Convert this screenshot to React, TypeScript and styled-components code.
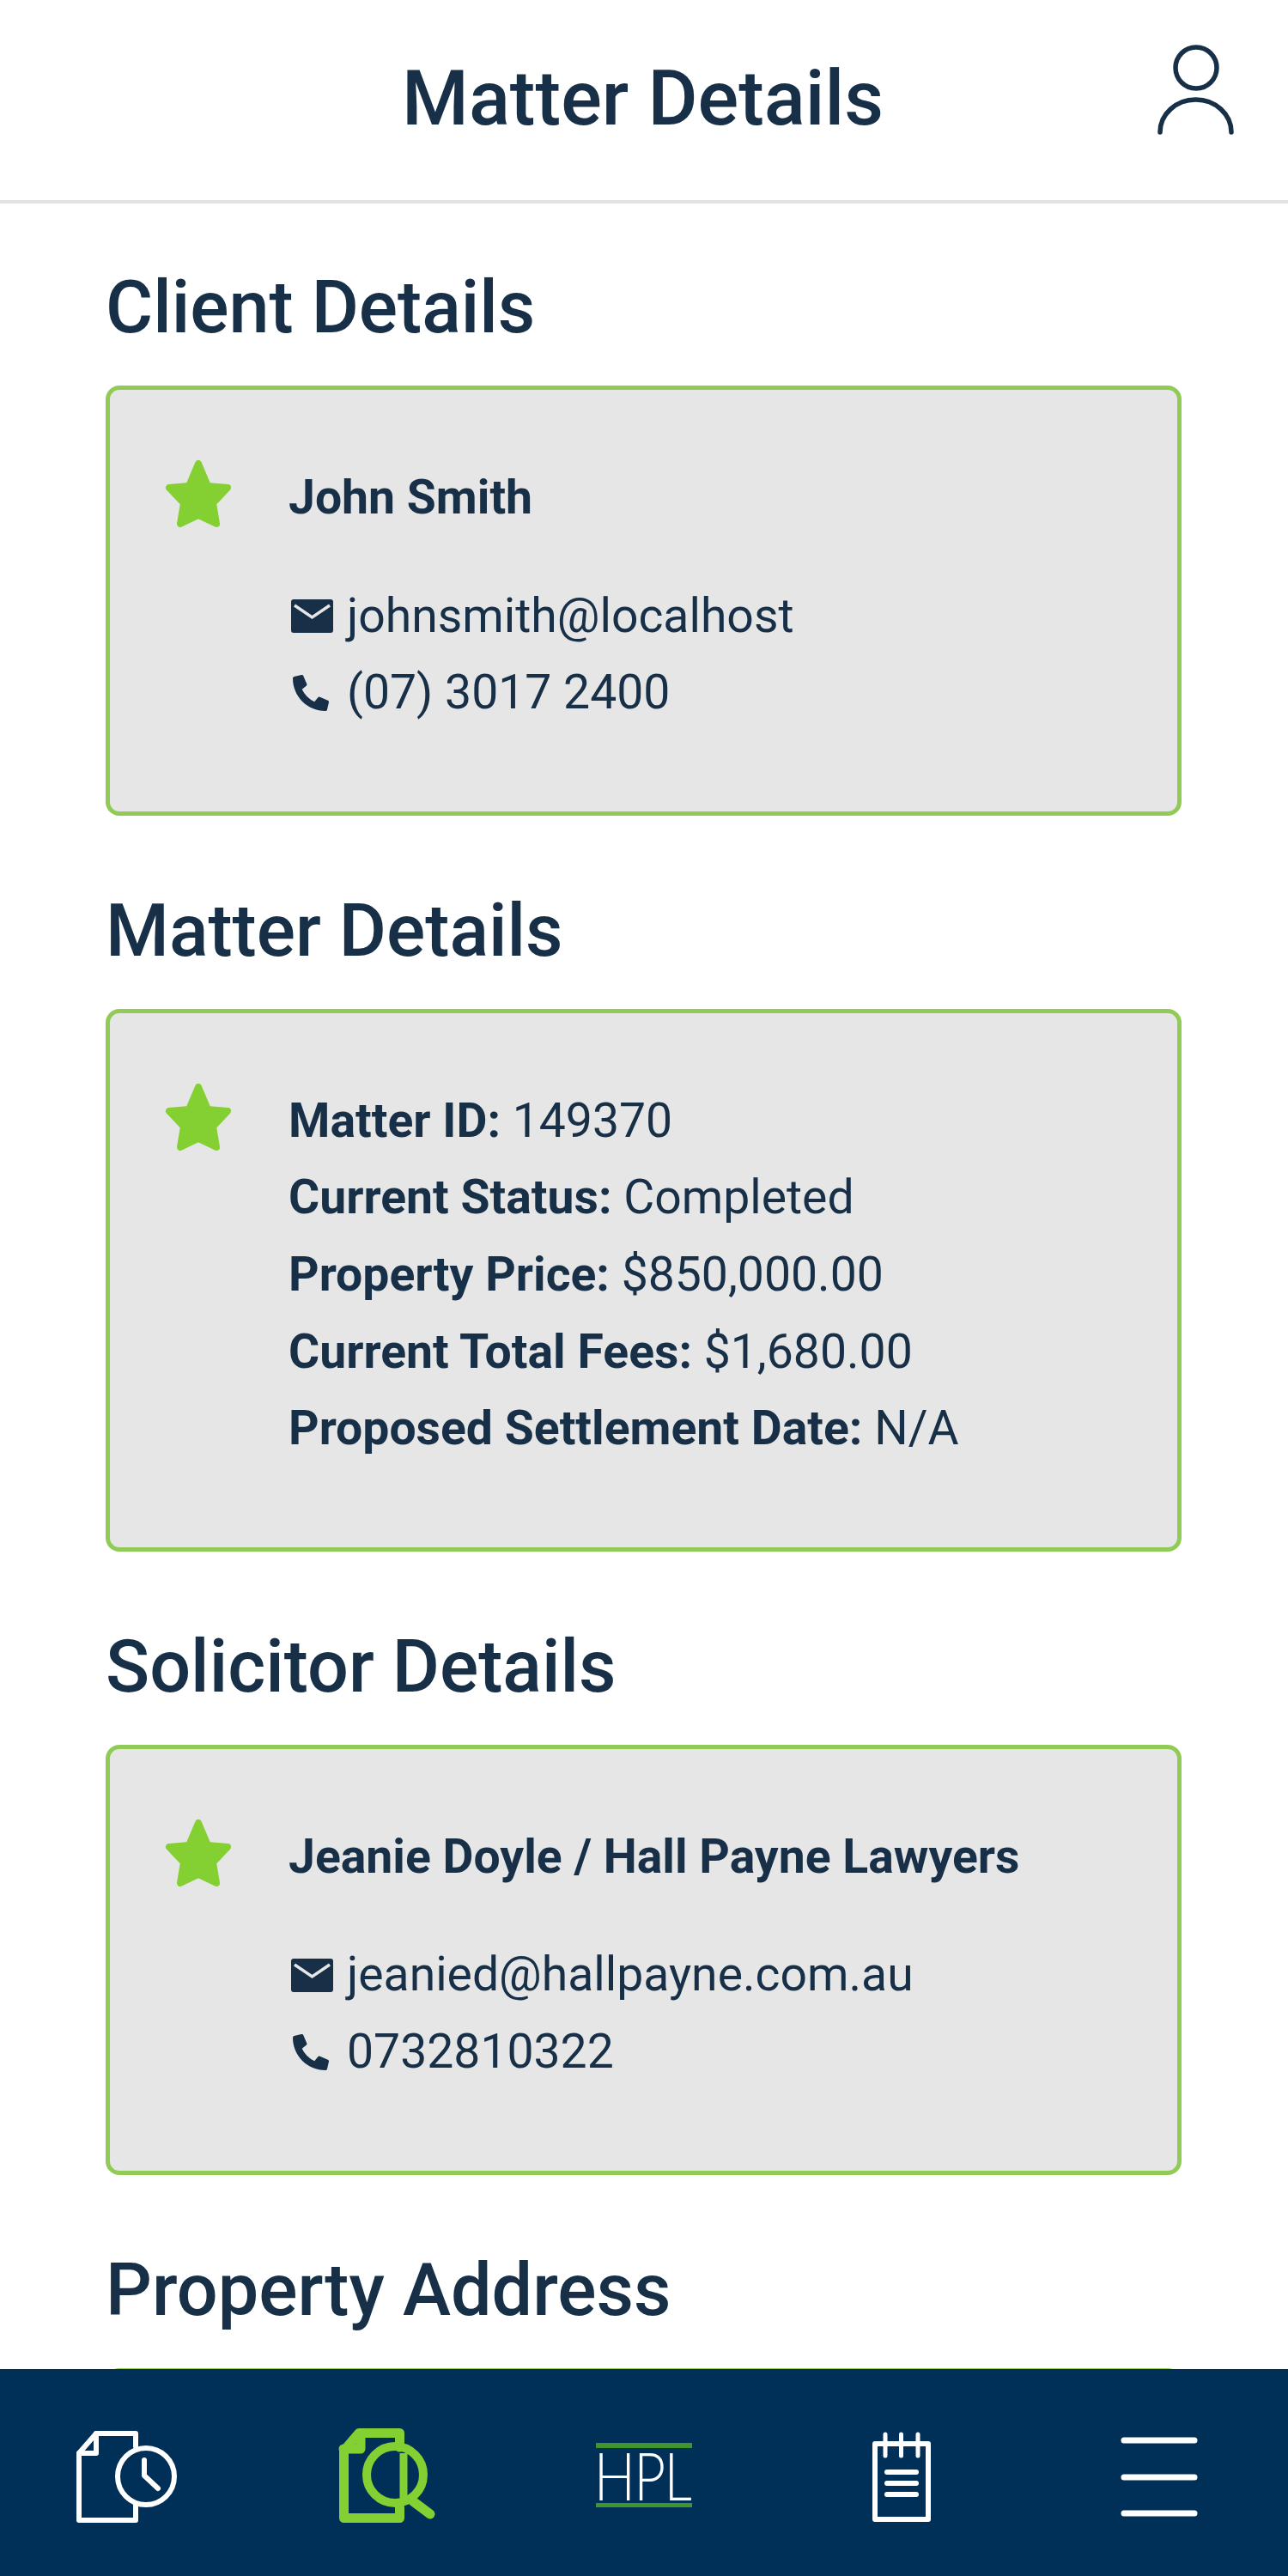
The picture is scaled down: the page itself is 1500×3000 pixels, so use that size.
import React from "react";
import styled, { createGlobalStyle } from "styled-components";
import { FaPhoneAlt } from "react-icons/fa";

const GlobalStyle = createGlobalStyle`
  html, body {
    margin: 0;
    padding: 0;
    background: #fff;
  }
  * {
    box-sizing: border-box;
  }
`;

const INK = "#172f47";
const GREEN = "#84d032";

const Screen = styled.div`
  width: 1500px;
  height: 3000px;
  display: flex;
  flex-direction: column;
  overflow: hidden;
  background: #fff;
  font-family: Roboto, "Liberation Sans", sans-serif;
  color: ${INK};
`;

const Header = styled.header`
  flex: none;
  height: 237px;
  display: grid;
  grid-template-columns: 1fr auto 1fr;
  align-items: start;
  border-bottom: 4px solid #e2e2e2;
`;

const Title = styled.h1`
  grid-column: 2;
  margin: 65px 3px 0 0;
  font-size: 89px;
  line-height: 100px;
  font-weight: 500;
`;

const UserButton = styled.div`
  grid-column: 3;
  justify-self: end;
  margin: 25px 57px 0 0;
  display: flex;
`;

const Content = styled.main`
  flex: 1;
  min-height: 0;
  overflow: hidden;
  padding: 72px 124px 0 123px;
`;

const Section = styled.section`
  margin-bottom: 85px;
`;

const SectionTitle = styled.h2`
  margin: 0 0 40px;
  font-size: 84.5px;
  line-height: 100px;
  font-weight: 500;
`;

const Card = styled.div`
  display: grid;
  grid-template-columns: 208px 1fr;
  padding: 81px 0 93px;
  background: #e6e6e6;
  border: 5px solid #8fcb55;
  border-radius: 16px;
`;

const StarCell = styled.div`
  display: flex;
  justify-content: flex-end;
  padding-right: 62px;
`;

const Body = styled.div`
  font-size: 55.3px;
  line-height: 89.6px;
`;

const Name = styled.div`
  font-weight: 700;
  margin-bottom: 48px;
`;

const Line = styled.div`
  display: flex;
  align-items: center;
`;

const ContactIcon = styled.span`
  flex: none;
  width: 68px;
  display: flex;
  align-items: center;
  padding-left: 5px;
`;

const Label = styled.b`
  font-weight: 700;
`;

const BottomBar = styled.nav`
  flex: none;
  height: 241px;
  display: grid;
  grid-template-columns: repeat(5, 300px);
  justify-items: center;
  align-items: start;
  padding-top: 61px;
  background: #003058;
`;

const NavIcon = styled.svg`
  display: block;
`;

const Logo = styled.div`
  width: 112px;
  height: 75px;
  margin-top: 25px;
  display: flex;
  align-items: center;
  justify-content: center;
  border-top: 6px solid #3f962e;
  border-bottom: 5px solid #3f962e;
  color: #fff;
  font-family: Lato, "Liberation Sans", sans-serif;
  font-size: 76px;
  font-weight: 300;
  line-height: 1;
  letter-spacing: -2px;
`;

const LogoText = styled.span`
  display: inline-block;
  transform: translateX(-2px) scaleX(0.84);
`;

const MailGlyph = styled.svg`
  margin-left: -2px;
`;

const Star = () => (
  <svg width="84" height="84" viewBox="0 0 84 84" aria-hidden="true">
    <path
      d="M41 5 L52 31 L75 33 L58 51 L62 75 L41 65 L20 75 L24 51 L7 33 L30 31 Z"
      fill={GREEN}
      stroke={GREEN}
      strokeWidth="8"
      strokeLinejoin="round"
    />
  </svg>
);

const MailIcon = () => (
  <MailGlyph width="49" height="39" viewBox="0 0 49 39" aria-hidden="true">
    <rect width="49" height="39" rx="3" fill={INK} />
    <path d="M4 7 L24.5 21 L45 7" fill="none" stroke="#e6e6e6" strokeWidth="3.5" />
  </MailGlyph>
);

const UserIcon = () => (
  <svg width="100" height="140" viewBox="0 0 100 140" fill="none" stroke={INK} strokeWidth="5.5" strokeLinecap="round" aria-hidden="true">
    <circle cx="50" cy="54" r="24" />
    <path d="M8 129 A41.5 38 0 0 1 91 129" />
  </svg>
);

const HistoryIcon = () => (
  <NavIcon width="140" height="130" viewBox="0 0 140 130" fill="none" stroke="#fff" strokeWidth="6" strokeLinejoin="round" strokeLinecap="round">
    <path d="M78 29 V14 H32 L12 37 V115 H78 V98" />
    <path d="M32 14 V37 H12" />
    <circle cx="90" cy="64" r="33" />
    <path d="M88 45 V63 L104 78" />
  </NavIcon>
);

const SearchDocIcon = () => (
  <NavIcon width="140" height="130" viewBox="0 0 140 130" fill="none" stroke={GREEN} strokeWidth="11" strokeLinejoin="round" strokeLinecap="round">
    <path d="M85.5 30 V13.5 H38 L20.5 34 V112.5 H85.5 V100" />
    <path d="M40 14 V32 H20" />
    <circle cx="80" cy="62" r="33" strokeWidth="10" />
    <path d="M90 37 V93" strokeWidth="9" strokeLinecap="butt" />
    <path d="M101 93 L121 108" />
  </NavIcon>
);

const NotesIcon = () => (
  <NavIcon width="140" height="130" viewBox="0 0 140 130" fill="none" stroke="#fff" strokeWidth="6" strokeLinecap="round" strokeLinejoin="round">
    <path d="M39 26 H101 V114 H39 Z" />
    <path d="M51 15 V40 M69.5 15 V40 M89 15 V40" strokeWidth="5" />
    <path d="M53 59 H87 M53 72 H87 M53 85 H87" strokeWidth="6" />
  </NavIcon>
);

const MenuIcon = () => (
  <NavIcon width="140" height="130" viewBox="0 0 140 130" fill="none" stroke="#fff" strokeWidth="7" strokeLinecap="round">
    <path d="M29 22 H111 M29 65 H111 M29 107 H111" />
  </NavIcon>
);

const ContactCard = ({ name, email, phone }: { name: string; email: string; phone: string }) => (
  <Card>
    <StarCell>
      <Star />
    </StarCell>
    <Body>
      <Name>{name}</Name>
      <Line>
        <ContactIcon>
          <MailIcon />
        </ContactIcon>
        {email}
      </Line>
      <Line>
        <ContactIcon>
          <FaPhoneAlt size={42} color={INK} />
        </ContactIcon>
        {phone}
      </Line>
    </Body>
  </Card>
);

const matterRows = [
  ["Matter ID:", "149370"],
  ["Current Status:", "Completed"],
  ["Property Price:", "$850,000.00"],
  ["Current Total Fees:", "$1,680.00"],
  ["Proposed Settlement Date:", "N/A"],
];

export default function App() {
  return (
    <Screen>
      <GlobalStyle />
      <Header>
        <Title>Matter Details</Title>
        <UserButton>
          <UserIcon />
        </UserButton>
      </Header>
      <Content>
        <Section>
          <SectionTitle>Client Details</SectionTitle>
          <ContactCard name="John Smith" email="johnsmith@localhost" phone="(07) 3017 2400" />
        </Section>
        <Section>
          <SectionTitle>Matter Details</SectionTitle>
          <Card>
            <StarCell>
              <Star />
            </StarCell>
            <Body>
              {matterRows.map(([label, value]) => (
                <div key={label}>
                  <Label>{label}</Label> {value}
                </div>
              ))}
            </Body>
          </Card>
        </Section>
        <Section>
          <SectionTitle>Solicitor Details</SectionTitle>
          <ContactCard name="Jeanie Doyle / Hall Payne Lawyers" email="jeanied@hallpayne.com.au" phone="0732810322" />
        </Section>
        <Section>
          <SectionTitle>Property Address</SectionTitle>
          <Card />
        </Section>
      </Content>
      <BottomBar>
        <HistoryIcon />
        <SearchDocIcon />
        <Logo>
          <LogoText>HPL</LogoText>
        </Logo>
        <NotesIcon />
        <MenuIcon />
      </BottomBar>
    </Screen>
  );
}
